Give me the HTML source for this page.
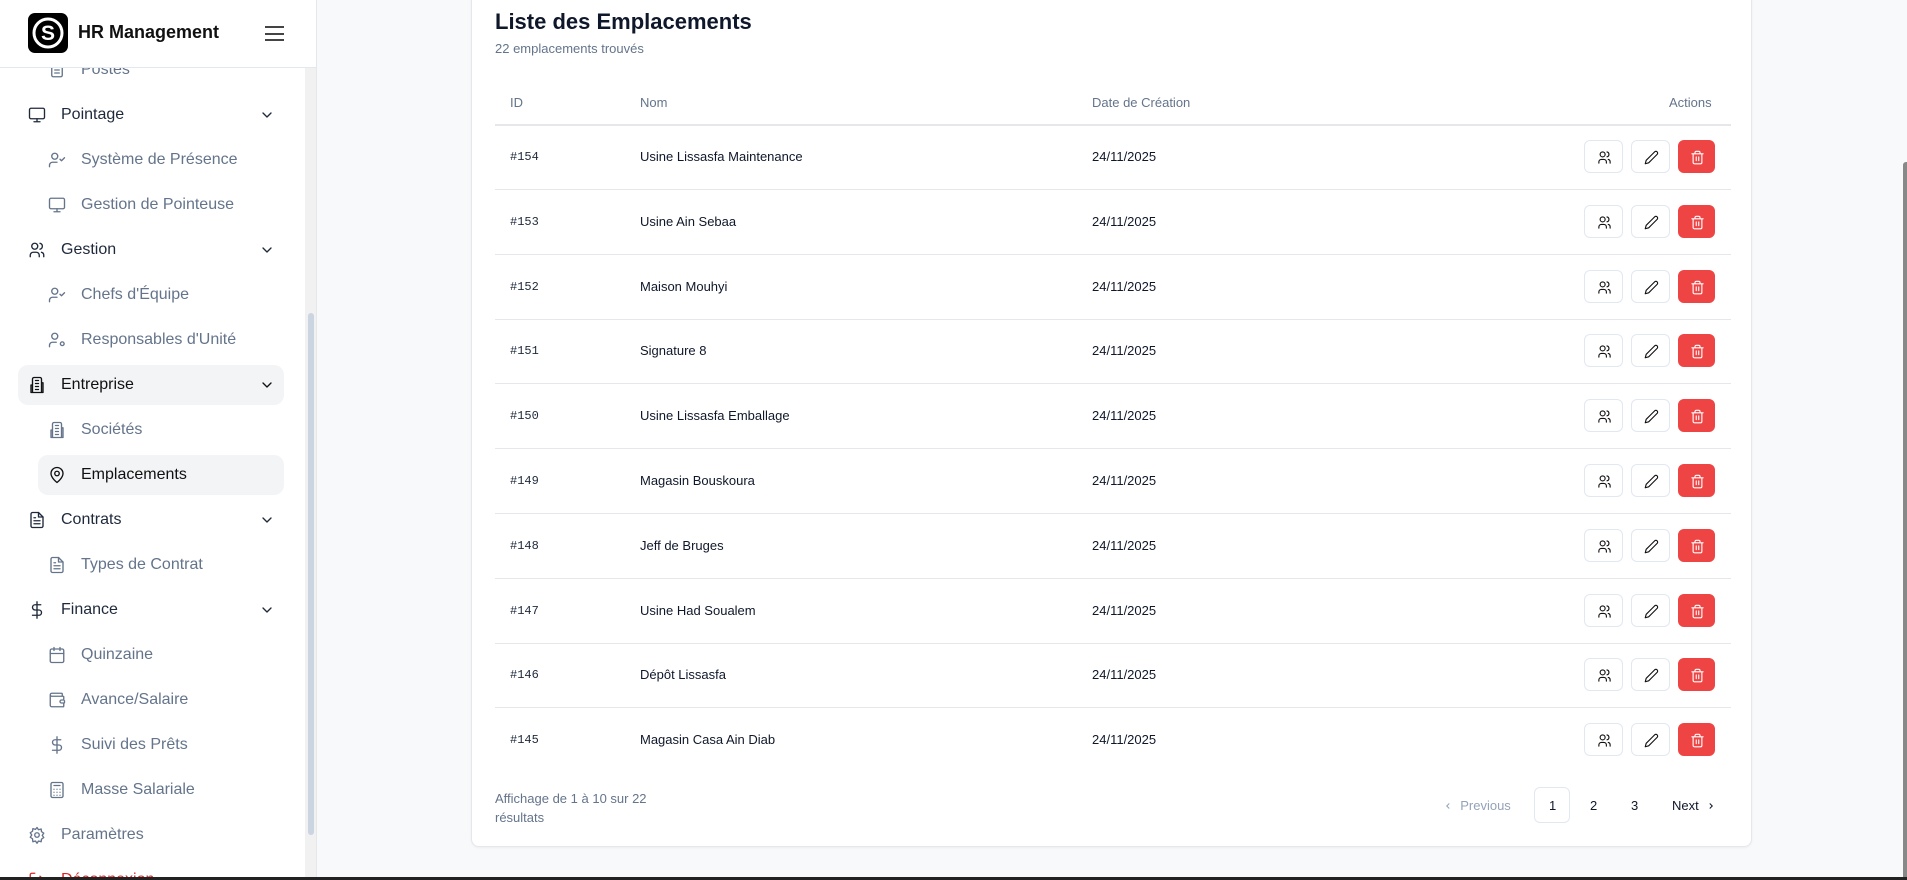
<!DOCTYPE html>
<html><head><meta charset="utf-8"><style>
*{box-sizing:border-box;margin:0;padding:0}
body{width:1907px;height:880px;overflow:hidden;background:#f8f9fb;font-family:"Liberation Sans",sans-serif;position:relative;color:#0f172a}
.sb{position:absolute;left:0;top:0;width:317px;height:880px;background:#fff;border-right:1px solid #e5e7eb;overflow:hidden}
.hdr{position:absolute;left:0;top:0;width:316px;height:68px;border-bottom:1px solid #e2e8f0;background:#fff;z-index:2}
.logo{position:absolute;left:28px;top:13px;width:40px;height:40px;background:#000;border-radius:7px}
.ttl{position:absolute;left:78px;top:22px;font-size:18px;font-weight:bold;color:#111}
.ham{position:absolute;left:265px;top:26px;width:19px}
.ham i{display:block;height:2px;background:#444;margin-bottom:4.5px}
.it{position:absolute;height:40px;display:flex;align-items:center;font-size:16px}
.it svg{position:absolute;left:0;top:11px;width:18px;height:18px;fill:none;stroke:currentColor;stroke-width:1.8;stroke-linecap:round;stroke-linejoin:round}
.p{left:18px;width:266px;color:#1e293b}
.p span{position:absolute;left:43px}
.p svg{left:10px}
.c{left:38px;width:246px;color:#64748b}
.c span{position:absolute;left:43px}
.c svg{left:10px}
.it svg.chev{left:241px;top:12px;width:16px;height:16px;stroke-width:2}
.act{background:#f3f4f6;border-radius:10px;color:#111}
.sbs{position:absolute;left:305px;top:68px;width:12px;height:812px;background:#f1f1f1}
.thumb{position:absolute;left:308px;top:313px;width:6px;height:522px;background:#cbd5e1;border-radius:3px}
.card{position:absolute;left:471px;top:-10px;width:1281px;height:857px;background:#fff;border:1px solid #e5e7eb;border-radius:8px;box-shadow:0 1px 2px rgba(0,0,0,.05)}
.h1{position:absolute;left:495px;top:9px;font-size:22px;font-weight:bold;color:#0f172a}
.sub{position:absolute;left:495px;top:41px;font-size:13px;color:#64748b}
.th{position:absolute;top:95px;font-size:13px;color:#64748b}
.line{position:absolute;left:495px;width:1236px;height:1px;background:#e5e7eb}
.td{position:absolute;font-size:13px;color:#0f172a}
.id{font-family:"Liberation Mono",monospace;font-size:12px;color:#1e293b}
.b{position:absolute;width:39px;height:33px;border:1px solid #e2e8f0;border-radius:6px;background:#fff}
.b svg{position:absolute;left:12px;top:9px;width:15px;height:15px;fill:none;stroke:#111;stroke-width:1.8;stroke-linecap:round;stroke-linejoin:round}
.b.r{background:#ef4444;border-color:#ef4444;width:37px}
.b.r svg{stroke:#fff;left:11px}
.pg{position:absolute;top:798px;font-size:13px}
.pg svg{width:10px;height:10px;fill:none;stroke:currentColor;stroke-width:2.5;vertical-align:-1px}
</style></head><body>
<div class="sb">
<div class="hdr"><div class="logo"><svg width="40" height="40" viewBox="0 0 40 40"><circle cx="20" cy="20" r="14" fill="none" stroke="#fff" stroke-width="3"/><text x="20" y="27" text-anchor="middle" font-family="Liberation Sans" font-weight="bold" font-size="21" fill="#fff">S</text></svg></div><div class="ttl">HR Management</div><div class="ham"><i></i><i></i><i></i></div></div>
<div class="it c" style="top:50px"><svg viewBox="0 0 24 24"><rect x="5" y="3" width="14" height="18" rx="2"/><path d="M9 8h6M9 12h6M9 16h6"/></svg><span>Postes</span></div>
<div class="it p" style="top:95px"><svg viewBox="0 0 24 24"><rect x="2" y="3" width="20" height="14" rx="2"/><path d="M8 21h8M12 17v4"/></svg><span>Pointage</span><svg class="chev" viewBox="0 0 24 24"><path d="M6 9l6 6 6-6"/></svg></div>
<div class="it c" style="top:140px"><svg viewBox="0 0 24 24"><circle cx="9" cy="7" r="4"/><path d="M2 21v-2a4 4 0 014-4h6M16 11l2 2 4-4"/></svg><span>Système de Présence</span></div>
<div class="it c" style="top:185px"><svg viewBox="0 0 24 24"><rect x="2" y="3" width="20" height="14" rx="2"/><path d="M8 21h8M12 17v4"/></svg><span>Gestion de Pointeuse</span></div>
<div class="it p" style="top:230px"><svg viewBox="0 0 24 24"><circle cx="9" cy="7" r="4"/><path d="M3 21v-2a4 4 0 014-4h4a4 4 0 014 4v2M16 3.1a4 4 0 010 7.8M21 21v-2a4 4 0 00-3-3.9"/></svg><span>Gestion</span><svg class="chev" viewBox="0 0 24 24"><path d="M6 9l6 6 6-6"/></svg></div>
<div class="it c" style="top:275px"><svg viewBox="0 0 24 24"><circle cx="9" cy="7" r="4"/><path d="M2 21v-2a4 4 0 014-4h6M16 11l2 2 4-4"/></svg><span>Chefs d'Équipe</span></div>
<div class="it c" style="top:320px"><svg viewBox="0 0 24 24"><circle cx="9" cy="7" r="4"/><path d="M2 21v-2a4 4 0 014-4h5"/><circle cx="19" cy="17" r="2.5"/></svg><span>Responsables d'Unité</span></div>
<div class="it p act" style="top:365px"><svg viewBox="0 0 24 24"><path d="M6 22V4a2 2 0 012-2h8a2 2 0 012 2v18zM6 12H4v10h2M18 9h2v13h-2M10 6h4M10 10h4M10 14h4M10 18h4"/></svg><span>Entreprise</span><svg class="chev" viewBox="0 0 24 24"><path d="M6 9l6 6 6-6"/></svg></div>
<div class="it c" style="top:410px"><svg viewBox="0 0 24 24"><path d="M6 22V4a2 2 0 012-2h8a2 2 0 012 2v18zM6 12H4v10h2M18 9h2v13h-2M10 6h4M10 10h4M10 14h4M10 18h4"/></svg><span>Sociétés</span></div>
<div class="it c act" style="top:455px"><svg viewBox="0 0 24 24"><path d="M20 10c0 6-8 12-8 12s-8-6-8-12a8 8 0 0116 0z"/><circle cx="12" cy="10" r="3"/></svg><span>Emplacements</span></div>
<div class="it p" style="top:500px"><svg viewBox="0 0 24 24"><path d="M14 2H6a2 2 0 00-2 2v16a2 2 0 002 2h12a2 2 0 002-2V8z"/><path d="M14 2v6h6M8 13h8M8 17h8M8 9h2"/></svg><span>Contrats</span><svg class="chev" viewBox="0 0 24 24"><path d="M6 9l6 6 6-6"/></svg></div>
<div class="it c" style="top:545px"><svg viewBox="0 0 24 24"><path d="M14 2H6a2 2 0 00-2 2v16a2 2 0 002 2h12a2 2 0 002-2V8z"/><path d="M14 2v6h6M8 13h8M8 17h8M8 9h2"/></svg><span>Types de Contrat</span></div>
<div class="it p" style="top:590px"><svg viewBox="0 0 24 24"><path d="M12 1v22M17 5H9.5a3.5 3.5 0 000 7h5a3.5 3.5 0 010 7H6"/></svg><span>Finance</span><svg class="chev" viewBox="0 0 24 24"><path d="M6 9l6 6 6-6"/></svg></div>
<div class="it c" style="top:635px"><svg viewBox="0 0 24 24"><rect x="3" y="4" width="18" height="18" rx="2"/><path d="M16 2v4M8 2v4M3 10h18"/></svg><span>Quinzaine</span></div>
<div class="it c" style="top:680px"><svg viewBox="0 0 24 24"><path d="M19 7V4a1 1 0 00-1-1H5a2 2 0 000 4h15a1 1 0 011 1v4h-3a2 2 0 000 4h3a1 1 0 001-1v-2M3 5v14a2 2 0 002 2h15a1 1 0 001-1v-4"/></svg><span>Avance/Salaire</span></div>
<div class="it c" style="top:725px"><svg viewBox="0 0 24 24"><path d="M12 1v22M17 5H9.5a3.5 3.5 0 000 7h5a3.5 3.5 0 010 7H6"/></svg><span>Suivi des Prêts</span></div>
<div class="it c" style="top:770px"><svg viewBox="0 0 24 24"><rect x="4" y="2" width="16" height="20" rx="2"/><path d="M8 6h8M8 11h.01M12 11h.01M16 11h.01M8 15h.01M12 15h.01M16 15h.01M8 19h.01M12 19h.01M16 19h.01"/></svg><span>Masse Salariale</span></div>
<div class="it p" style="top:815px;color:#64748b"><svg viewBox="0 0 24 24"><circle cx="12" cy="12" r="3"/><path d="M12 2l2 3 3.5-1 .5 3.5 3 2-2 3 2 3-3 2-.5 3.5-3.5-1-2 3-2-3-3.5 1L6 17l-3-2 2-3-2-3 3-2 .5-3.5 3.5 1z"/></svg><span>Paramètres</span></div>
<div class="it p" style="top:860px;color:#dc2626"><svg viewBox="0 0 24 24"><path d="M9 21H5a2 2 0 01-2-2V5a2 2 0 012-2h4M16 17l5-5-5-5M21 12H9"/></svg><span>Déconnexion</span></div>
<div class="sbs"></div><div class="thumb"></div>
</div>
<div class="card"></div>
<div class="h1">Liste des Emplacements</div>
<div class="sub">22 emplacements trouvés</div>
<div class="th" style="left:510px">ID</div><div class="th" style="left:640px">Nom</div><div class="th" style="left:1092px">Date de Création</div><div class="th" style="left:1669px">Actions</div>
<div class="line" style="top:124px;height:2px"></div>
<div id="rows"></div>
<div style="position:absolute;left:495px;top:789px;font-size:13px;color:#64748b;line-height:19px">Affichage de 1 à 10 sur 22<br>résultats</div>
<div class="pg" style="left:1443px;color:#94a3b8"><svg viewBox="0 0 24 24"><path d="M15 6l-6 6 6 6"/></svg>&nbsp; Previous</div>
<div style="position:absolute;left:1534px;top:787px;width:36px;height:36px;border:1px solid #e2e8f0;border-radius:6px"></div>
<div class="pg" style="left:1549px">1</div><div class="pg" style="left:1590px">2</div><div class="pg" style="left:1631px">3</div><div class="pg" style="left:1672px">Next &nbsp;<svg viewBox="0 0 24 24"><path d="M9 6l6 6-6 6"/></svg></div>
<div style="position:absolute;left:1893px;top:0;width:14px;height:880px;background:#f8f9fb"></div>
<div style="position:absolute;left:1903px;top:162px;width:4px;height:718px;background:#888;border-radius:3px 0 0 0"></div>
<div style="position:absolute;left:0;top:877px;width:1907px;height:3px;background:#222"></div>
<script>
var d=[["#154","Usine Lissasfa Maintenance"],["#153","Usine Ain Sebaa"],["#152","Maison Mouhyi"],["#151","Signature 8"],["#150","Usine Lissasfa Emballage"],["#149","Magasin Bouskoura"],["#148","Jeff de Bruges"],["#147","Usine Had Soualem"],["#146","Dépôt Lissasfa"],["#145","Magasin Casa Ain Diab"]];
var h="";d.forEach(function(r,i){var c=157+i*64.8;
h+='<div class="td id" style="left:510px;top:'+(c-7)+'px">'+r[0]+'</div><div class="td" style="left:640px;top:'+(c-8)+'px">'+r[1]+'</div><div class="td" style="left:1092px;top:'+(c-8)+'px">24/11/2025</div>';
h+='<div class="b" style="left:1584px;top:'+(c-17)+'px"><svg viewBox="0 0 24 24"><circle cx="9" cy="7" r="4"/><path d="M3 21v-2a4 4 0 014-4h4a4 4 0 014 4v2M16 3.1a4 4 0 010 7.8M21 21v-2a4 4 0 00-3-3.9"/></svg></div>';
h+='<div class="b" style="left:1631px;top:'+(c-17)+'px"><svg viewBox="0 0 24 24"><path d="M17 3a2.8 2.8 0 014 4L7.5 20.5 2 22l1.5-5.5z"/></svg></div>';
h+='<div class="b r" style="left:1678px;top:'+(c-17)+'px"><svg viewBox="0 0 24 24"><path d="M3 6h18M19 6v14a2 2 0 01-2 2H7a2 2 0 01-2-2V6M8 6V4a2 2 0 012-2h4a2 2 0 012 2v2M10 11v6M14 11v6"/></svg></div>';
if(i<9)h+='<div class="line" style="top:'+(c+32)+'px"></div>';});
document.getElementById('rows').innerHTML=h;
</script>
</body></html>
